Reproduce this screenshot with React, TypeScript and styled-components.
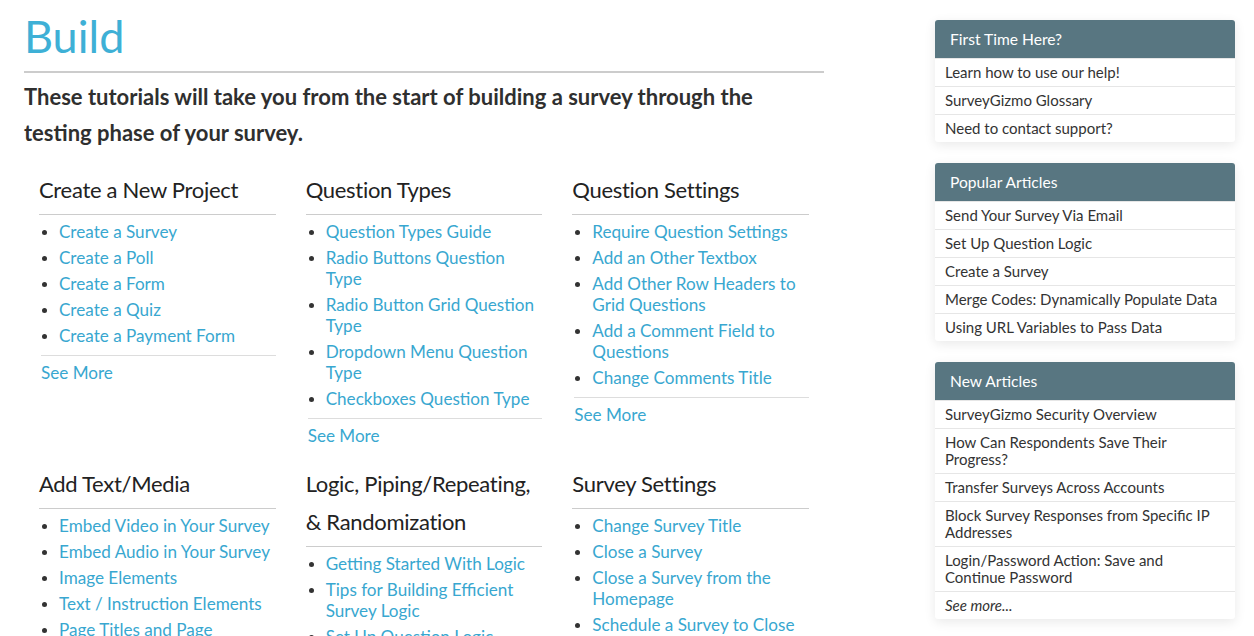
import React from "react";
import styled, { createGlobalStyle } from "styled-components";

const Global = createGlobalStyle`
  html, body { margin: 0; padding: 0; background: #fff; }
  body { font-family: "Lato", "Open Sans", sans-serif; color: #333; }
  * { box-sizing: border-box; }
`;

const Page = styled.div`
  display: flex;
  justify-content: space-between;
  align-items: flex-start;
  padding: 0 19px 0 24px;
  height: 636px;
  overflow: hidden;
`;

const Main = styled.main`
  width: 800px;
  flex: none;
`;

const Title = styled.h1`
  margin: 0;
  padding-top: 11px;
  font-size: 45px;
  line-height: 50px;
  font-weight: 400;
  color: #3eb0d6;
`;

const Rule = styled.hr`
  margin: 10px 0 0;
  border: 0;
  border-top: 2px solid #cccccc;
`;

const Lead = styled.p`
  margin: 6px 0 0;
  max-width: 780px;
  font-size: 22px;
  line-height: 36px;
  font-weight: 700;
  color: #2f2f2f;
`;

const Grid = styled.div`
  display: grid;
  grid-template-columns: repeat(3, 1fr);
  row-gap: 19px;
  margin-top: 20px;
`;

const Column = styled.section`
  padding: 0 15px;
`;

const ColHead = styled.h3`
  margin: 0;
  font-size: 22px;
  line-height: 38px;
  font-weight: 400;
  color: #222;
  letter-spacing: -0.3px;
  padding-bottom: 5px;
  border-bottom: 1px solid #cccccc;
`;

const LinkList = styled.ul`
  margin: 6px 0 0;
  padding: 0 0 0 20px;
  list-style: disc;
  color: #333;
`;

const LinkItem = styled.li`
  font-size: 17.1px;
  line-height: 21px;
  margin-bottom: 5px;
  &::marker { font-size: 15px; }
`;

const Link = styled.a`
  color: #38a7d0;
  text-decoration: none;
`;

const SeeMore = styled.div`
  margin: 9px 0 0 2px;
  padding-top: 6px;
  border-top: 1px solid #dddddd;
  font-size: 17.1px;
  line-height: 21px;
`;

const Sidebar = styled.aside`
  width: 300px;
  flex: none;
  padding-top: 20px;
  display: flex;
  flex-direction: column;
  gap: 21px;
`;

const Panel = styled.div`
  background: #fff;
  border-radius: 3px;
  box-shadow: 0 3px 12px rgba(0, 0, 0, 0.09);
`;

const PanelHead = styled.div`
  background: #587681;
  color: #fff;
  height: 38px;
  line-height: 38px;
  padding-left: 15px;
  font-size: 15.6px;
  border-radius: 3px 3px 0 0;
`;

const PanelItem = styled.div<{ $italic?: boolean }>`
  padding: 5px 10px;
  font-size: 15px;
  line-height: 17px;
  color: #333;
  border-top: 1px solid #e6e6e6;
  font-style: ${(p) => (p.$italic ? "italic" : "normal")};
`;

type Col = { title: string; links: string[]; more?: boolean };

const columns: Col[] = [
  {
    title: "Create a New Project",
    links: ["Create a Survey", "Create a Poll", "Create a Form", "Create a Quiz", "Create a Payment Form"],
    more: true,
  },
  {
    title: "Question Types",
    links: [
      "Question Types Guide",
      "Radio Buttons Question Type",
      "Radio Button Grid Question Type",
      "Dropdown Menu Question Type",
      "Checkboxes Question Type",
    ],
    more: true,
  },
  {
    title: "Question Settings",
    links: [
      "Require Question Settings",
      "Add an Other Textbox",
      "Add Other Row Headers to Grid Questions",
      "Add a Comment Field to Questions",
      "Change Comments Title",
    ],
    more: true,
  },
  {
    title: "Add Text/Media",
    links: [
      "Embed Video in Your Survey",
      "Embed Audio in Your Survey",
      "Image Elements",
      "Text / Instruction Elements",
      "Page Titles and Page Descriptions",
    ],
  },
  {
    title: "Logic, Piping/Repeating, & Randomization",
    links: ["Getting Started With Logic", "Tips for Building Efficient Survey Logic", "Set Up Question Logic"],
  },
  {
    title: "Survey Settings",
    links: [
      "Change Survey Title",
      "Close a Survey",
      "Close a Survey from the Homepage",
      "Schedule a Survey to Close",
    ],
  },
];

const panels: { title: string; items: string[]; more?: boolean }[] = [
  { title: "First Time Here?", items: ["Learn how to use our help!", "SurveyGizmo Glossary", "Need to contact support?"] },
  {
    title: "Popular Articles",
    items: [
      "Send Your Survey Via Email",
      "Set Up Question Logic",
      "Create a Survey",
      "Merge Codes: Dynamically Populate Data",
      "Using URL Variables to Pass Data",
    ],
  },
  {
    title: "New Articles",
    items: [
      "SurveyGizmo Security Overview",
      "How Can Respondents Save Their Progress?",
      "Transfer Surveys Across Accounts",
      "Block Survey Responses from Specific IP Addresses",
      "Login/Password Action: Save and Continue Password",
    ],
    more: true,
  },
];

export default function App() {
  return (
    <>
      <Global />
      <Page>
        <Main>
          <Title>Build</Title>
          <Rule />
          <Lead>
            These tutorials will take you from the start of building a survey through the testing phase of your
            survey.
          </Lead>
          <Grid>
            {columns.map((c) => (
              <Column key={c.title}>
                <ColHead>{c.title}</ColHead>
                <LinkList>
                  {c.links.map((l) => (
                    <LinkItem key={l}>
                      <Link href="#">{l}</Link>
                    </LinkItem>
                  ))}
                </LinkList>
                {c.more && (
                  <SeeMore>
                    <Link href="#">See More</Link>
                  </SeeMore>
                )}
              </Column>
            ))}
          </Grid>
        </Main>
        <Sidebar>
          {panels.map((p) => (
            <Panel key={p.title}>
              <PanelHead>{p.title}</PanelHead>
              {p.items.map((i) => (
                <PanelItem key={i}>{i}</PanelItem>
              ))}
              {p.more && <PanelItem $italic>See more...</PanelItem>}
            </Panel>
          ))}
        </Sidebar>
      </Page>
    </>
  );
}
